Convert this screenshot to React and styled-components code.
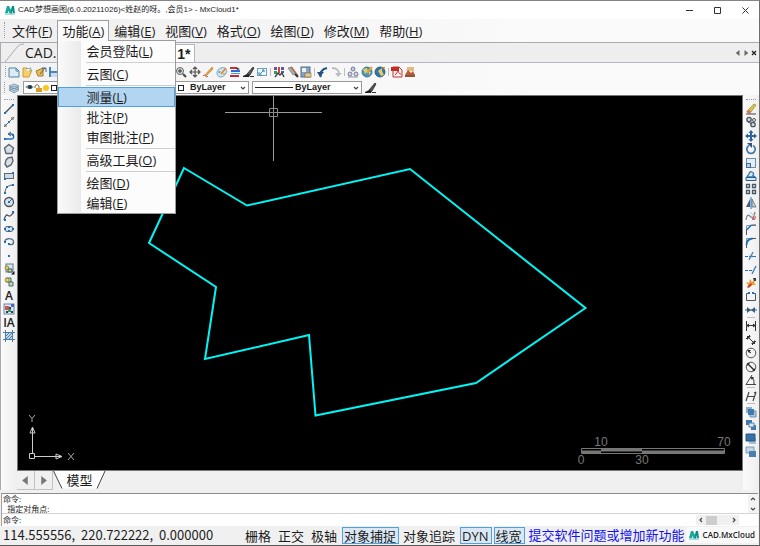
import React from "react";
import styled, { createGlobalStyle, css } from "styled-components";

const UI = '"Open Sans", "Noto Sans CJK SC", sans-serif';

const GlobalStyle = createGlobalStyle`
  * { box-sizing: border-box; }
  body { margin: 0; font-family: ${UI}; font-size: 13px; line-height: 16px; color: #1c1c1c; }
  button, input, select { font: inherit; color: inherit; margin: 0; padding: 0; border: 0; background: none; border-radius: 0; }
  svg { display: block; flex: none; }
`;

const Window = styled.div`
  display: flex;
  flex-direction: column;
  height: 100vh;
  overflow: hidden;
  border-top: 1px solid #858585;
  border-right: 1px solid #6f6f6f;
  border-bottom: 1px solid #555;
  background: #f0f0f0;
`;

/* ---------- title bar ---------- */
const TitleBar = styled.header`
  display: flex;
  align-items: center;
  height: 18px;
  flex: none;
  padding: 0 7px 0 5px;
  gap: 3px;
  background: #fff;
`;
const Title = styled.h1`
  flex: 1;
  margin: 0;
  font-family: "Liberation Sans", "Noto Sans CJK SC", sans-serif;
  font-size: 8px;
  line-height: 12px;
  font-weight: 400;
  white-space: nowrap;
`;
const Caption = styled.div`
  display: flex;
  gap: 14px;
`;
const CaptionButton = styled.button`
  display: grid;
  place-items: center;
  width: 14px;
  height: 16px;
`;

/* ---------- menu bar ---------- */
const MenuBar = styled.nav`
  display: flex;
  align-items: stretch;
  height: 23px;
  flex: none;
  padding: 1px 0 2px 4px;
  background: linear-gradient(90deg, #efefef, #fafafa 70%);
`;
const Grip = styled.span`
  flex: none;
  align-self: center;
  ${(p) =>
    p.$across
      ? css`width: 10px; margin-bottom: 3px; border-top: 1px dotted #999;`
      : css`height: ${p.$tall ? 16 : 11}px; border-left: 1px dotted #999;`}
`;
const MenuList = styled.ul`
  display: flex;
  margin: 0 0 0 2px;
  padding: 0;
  list-style: none;
`;
const MenuItem = styled.li`
  position: relative;
`;
const MenuButton = styled.button`
  height: 20px;
  padding: 0 4px;
  white-space: nowrap;
  border: 1px solid transparent;
  border-bottom: 0;
  ${(p) =>
    p.$open &&
    css`
      border-color: #a0a0a0;
      background: #fbfbfb;
    `}
`;
const Dropdown = styled.div`
  position: absolute;
  z-index: 5;
  top: 20px;
  left: 0;
  width: 119px;
  border: 1px solid #9c9c9c;
  background: linear-gradient(90deg, #fafafa, #eaeaea 23px, #fcfcfc 23px);
  &::before {
    content: "";
    position: absolute;
    top: -1px;
    left: 0;
    width: 50px;
    height: 1px;
    background: #fbfbfb;
  }
`;
const DropdownItem = styled.button`
  display: flex;
  align-items: center;
  width: 100%;
  height: 20px;
  padding-left: 27px;
  white-space: nowrap;
  border: 1px solid ${(p) => (p.$active ? "#4fa0e0" : "transparent")};
  background: ${(p) => (p.$active ? "#b2d5f1" : "transparent")};
`;
const Divider = styled.hr`
  height: 1px;
  margin: 1px 0 1px 28px;
  border: 0;
  background: #cfcfcf;
`;

/* ---------- document tabs ---------- */
const DocTabs = styled.div`
  display: flex;
  align-items: stretch;
  height: 21px;
  flex: none;
  border-top: 1px solid #a9abb3;
  border-bottom: 1px solid #b4b6c0;
  border-left: 1px solid #a9abb3;
  background: #eee;
`;
const DocTab = styled.button`
  display: flex;
  align-items: center;
  font-size: 14px;
  white-space: nowrap;
  ${(p) =>
    p.$current
      ? css`
          width: 137px;
          justify-content: flex-end;
          padding-right: 3px;
          margin-top: 1px;
          font-family: "Liberation Sans", sans-serif;
          font-weight: 700;
          background: #fff;
          border: 1px solid #b4b6c0;
          border-bottom: 0;
        `
      : css`padding-right: 1px;`}
`;
const DocTabControls = styled.div`
  display: flex;
  align-items: center;
  margin-left: auto;
  padding-right: 1px;
`;
const TinyButton = styled.button`
  display: grid;
  place-items: center;
  width: ${(p) => p.$w || 8}px;
  height: ${(p) => p.$h || 10}px;
`;

/* ---------- toolbars ---------- */
const Toolbars = styled.div`
  flex: none;
  border-left: 1px solid #a9abb3;
  background: linear-gradient(90deg, #f2f2f2, #fafafa 70%);
`;
const ToolRow = styled.div`
  display: flex;
  align-items: center;
  height: ${(p) => p.$h}px;
  padding-left: ${(p) => 6 - p.$gap}px;
  gap: ${(p) => p.$gap}px;
`;
const ToolGroup = styled.div`
  display: flex;
  flex: none;
  flex-direction: ${(p) => (p.$vertical ? "column" : "row")};
  justify-content: space-between;
  ${(p) => (p.$vertical ? "height" : "width")}: ${(p) => p.$size}px;
  margin-left: ${(p) => p.$indent || 0}px;
`;
const ToolButton = styled.button`
  display: grid;
  place-items: center;
  width: 12px;
  height: 12px;
`;
const Separator = styled.span`
  flex: none;
  background: #bdbdbd;
  ${(p) => (p.$across ? css`width: 8px; height: 1px; margin: 1px 0 2px;` : css`width: 1px; height: 8px;`)}
`;
const Combo = styled.label`
  position: relative;
  display: flex;
  align-items: center;
  flex: none;
  width: ${(p) => p.$w}px;
  height: 13px;
  margin-left: ${(p) => p.$indent || 0}px;
  border: 1px solid #9a9a9a;
  background: #fff;
  & > svg { position: absolute; left: ${(p) => p.$art || 3}px; pointer-events: none; }
  & > svg:last-child { left: auto; right: 2px; }
`;
const Select = styled.select`
  appearance: none;
  width: 100%;
  height: 11px;
  padding-left: ${(p) => p.$pad}px;
  font-family: "Liberation Sans", sans-serif;
  font-size: 9px;
  line-height: 11px;
  font-weight: 700;
`;

/* ---------- workspace ---------- */
const Workspace = styled.main`
  display: flex;
  flex: 1;
  min-height: 0;
`;
const SideBar = styled.aside`
  display: flex;
  flex-direction: column;
  align-items: center;
  flex: none;
  width: 16px;
  padding-top: 4px;
  background: linear-gradient(90deg, #fafafa, #efefef);
  ${(p) => p.$left && css`width: 17px; border-left: 1px solid #a9abb3;`}
`;
const Center = styled.div`
  display: flex;
  flex-direction: column;
  flex: 1;
  min-width: 0;
`;
const Canvas = styled.section`
  position: relative;
  flex: 1;
  overflow: hidden;
  border: 1px solid #777;
  background: #000;
`;
const Overlay = styled.svg`
  position: absolute;
  ${(p) => p.$at}
`;
const SheetTabs = styled.div`
  display: flex;
  height: 19px;
  flex: none;
  background: #f0f0f0;
`;
const SheetArrow = styled.button`
  display: grid;
  place-items: center;
  width: 18px;
  border: 1px solid #c2c2c2;
  border-top: 0;
  border-left: 0;
`;
const SheetTab = styled.button`
  position: relative;
  width: 53px;
  height: 18px;
  & > svg { position: absolute; top: 0; left: 0; }
  & > span { position: relative; }
`;

/* ---------- command line ---------- */
const CommandPane = styled.section`
  display: flex;
  flex: none;
  flex-direction: column;
  margin: 3px 1px 0 1px;
  border-top: 1px solid #8c8c8c;
  border-left: 1px solid #a0a0a0;
  background: #fff;
  font-size: 8px;
  line-height: 10px;
`;
const History = styled.div`
  display: flex;
  justify-content: space-between;
  height: 20px;
  border-bottom: 1px solid #d4d4d4;
`;
const Log = styled.div`
  padding-left: 1px;
  white-space: pre;
`;
const ScrollColumn = styled.div`
  display: flex;
  flex-direction: column;
  justify-content: space-between;
  background: #f3f3f3;
`;
const Prompt = styled.div`
  display: flex;
  align-items: center;
  height: 12px;
  padding: 0 19px 0 1px;
  & > input { flex: 1; min-width: 0; height: 10px; outline: 0; }
`;
const ScrollRow = styled.div`
  display: flex;
  align-items: center;
  width: 43px;
  height: 10px;
  background: #f0f0f0;
  & > button:last-child { margin-left: auto; }
`;
const Thumb = styled.span`
  width: 11px;
  height: 9px;
  background: #cdcdcd;
`;

/* ---------- status bar ---------- */
const StatusBar = styled.footer`
  display: flex;
  align-items: center;
  height: 19px;
  flex: none;
  padding: 0 1px 1px 3px;
  background: #f0f0f0;
  white-space: nowrap;
`;
const Coordinates = styled.output`
  flex: none;
  width: 240px;
  font-family: "Noto Sans CJK SC", sans-serif;
  white-space: pre;
`;
const Modes = styled.div`
  display: flex;
  gap: 2px;
`;
const Mode = styled.button`
  height: 17px;
  padding: 0 2px 0 1px;
  border: 1px solid ${(p) => (p.$on ? "#4fa0e0" : "transparent")};
  background: ${(p) => (p.$on ? "#dbe8f4" : "transparent")};
`;
const Feedback = styled.a`
  margin-left: 4px;
  color: #1212f0;
  text-decoration: none;
`;
const Brand = styled.div`
  display: flex;
  align-items: center;
  gap: 4px;
  height: 16px;
  margin-left: auto;
  padding: 0 3px;
  background: #f9f9f9;
  font-size: 8px;
  font-weight: 600;
  color: #222;
`;

/* ---------- icons ---------- */
const B = "#1d6fc0";
const K = "#4a5560";
const dot = (x, y, r = 1) => <rect x={x - r} y={y - r} width={2 * r} height={2 * r} fill={B} />;

const ICONS = {
  newFile: <><path d="M1 2h7l3 3v6H1z" fill="#dcecf7" stroke="#5583a6" /><path d="M8 2v3h3" fill="none" stroke="#5583a6" /></>,
  open: <><path d="M2 2h4l1 2h4L8 11H2z" fill="#f5cf6c" stroke="#d19b2b" /><path d="M5 3l5-1-2 4" fill="#fff" stroke="#8aa" /></>,
  openWeb: <><path d="M1 5l7-3v8H3z" fill="#eebe4d" stroke="#a07a28" /><path d="M5 8l5-6M7 2h4v4" fill="none" stroke="#46617a" /></>,
  save: <><rect x="1" y="1" width="10" height="10" fill="#4c83b8" /><rect x="3" y="1" width="6" height="4" fill="#e8f1f8" /><rect x="3" y="7" width="6" height="4" fill="#c9dced" /></>,
  zoom: <><circle cx="5" cy="5" r="3.5" fill="#cfd8df" stroke="#666" /><path d="M8 8l3 3" stroke="#444" strokeWidth="2" /><path d="M3 5h4M5 3v4" stroke="#333" /></>,
  pan: <path d="M6 1v10M1 6h10M4 3l2-2 2 2M4 9l2 2 2-2M3 4L1 6l2 2M9 4l2 2-2 2" fill="none" stroke="#555" strokeWidth="1.2" />,
  pencil: <><path d="M3 9l7-8 1 2-7 7z" fill="#f0a33a" stroke="#b87424" strokeWidth=".6" /><path d="M1 10c2-3 3 3 5 0" fill="none" stroke="#b5403a" /></>,
  palette: <><path d="M1 7c0-5 7-7 9-4s-1 8-6 8c-2 0-3-2-3-4z" fill="#d5e4ea" stroke="#75aac8" /><path d="M5 8l5-6" stroke="#db8a31" strokeWidth="1.5" /><circle cx="3.5" cy="6" r="1" fill="#36a0d5" /><circle cx="8" cy="8" r="1" fill="#e5a438" /></>,
  layersColor: <><path d="M1 1h7v2H1z" fill="#d32f2f" /><path d="M2 4h9v2H2z" fill="#3468d4" /><path d="M2 7h9v1H2z" fill="#37a6d2" /><path d="M1 9h9v2H1z" fill="#c22644" /><path d="M7 1l4 2-3 1z" fill="#333" /></>,
  brush: <><path d="M4 8l6-7 1 1-4 7z" fill="#555" stroke="#222" strokeWidth=".7" /><path d="M0 10l4-2 3 1-1 2H0z" fill="#222" /><path d="M7 10.500h4" stroke="#333" /></>,
  resize: <><rect x="1.500" y="2.500" width="9" height="7" fill="#eef7fb" stroke="#6ba2bd" /><path d="M4 8l4-4M6 4h2v2M3 6v3h3" fill="none" stroke="#4283a7" /></>,
  find: <><path d="M1 1h3v3H1zM8 1h3v3H8z" fill="#74528e" /><path d="M1 5h3v3H1z" fill="#339a5b" /><path d="M5 1h2v6H5z" fill="#c6484b" /><path d="M8 5h3v2H8z" fill="#38689c" /><path d="M2 11l3-4 2 2 2-2 2 4" fill="none" stroke="#444" strokeWidth="1.4" /></>,
  tools: <><path d="M1 2l4-1 4 6-3 2z" fill="#a8adb3" stroke="#777" strokeWidth=".7" /><path d="M4 1l7 9" stroke="#bd6b57" strokeWidth="1.5" /><path d="M8 8l3 3" stroke="#333" strokeWidth="2" /></>,
  panel: <><rect x="1" y="1" width="9" height="10" fill="#86a4c0" stroke="#526c85" /><rect x="2" y="2" width="4" height="4" fill="#e9f0f5" /><rect x="5" y="7" width="6" height="4" fill="#e9c987" stroke="#7b613b" strokeWidth=".6" /></>,
  undo: <><path d="M4 11C2 7 5 3 10 2" fill="none" stroke="#234f83" strokeWidth="2" /><path d="M0 6h7l-4 5z" fill="#234f83" /></>,
  redo: <><path d="M2 2c5 0 7 3 7 6" fill="none" stroke="#b7bcc1" strokeWidth="2" /><path d="M5 7h7l-4 4z" fill="#b7bcc1" /></>,
  stamp: <><circle cx="6" cy="3" r="2" fill="#c6ccda" stroke="#717a9a" /><circle cx="3" cy="8" r="2" fill="#d5d9e4" stroke="#717a9a" /><circle cx="9" cy="8" r="2" fill="#d5d9e4" stroke="#717a9a" /><path d="M1 11h10" stroke="#8a91aa" /></>,
  globe: <><circle cx="6" cy="6" r="5" fill="#4596c7" stroke="#3c657a" strokeWidth=".8" /><path d="M2 3l4-1 1 3-3 3zM8 6l2 0-2 4z" fill="#d7cf6d" /><path d="M6 7l5-6" stroke="#e5a33a" strokeWidth="2" /></>,
  globeBack: <><circle cx="6" cy="6" r="5" fill="#2e77ab" stroke="#245272" strokeWidth=".8" /><path d="M4 5l4-3v3l2 4-3 1z" fill="#edc667" /><path d="M8 1l3 0-1 3z" fill="#d57d2e" /></>,
  pdf: <><path d="M2 1h6l3 3v7H2z" fill="#f9f0ef" stroke="#b53b34" /><rect x="0" y="1" width="8" height="4" fill="#ca2c25" /><path d="M4 9c2-1 2-4 3-4s0 3 3 3" fill="none" stroke="#ca2c25" /></>,
  image: <><path d="M3 1h7v4H3z" fill="#e9b87c" /><path d="M1 9l3-5 3 3 2-2 2 4v2H1z" fill="#b85b36" /><path d="M1 10h10" stroke="#6a4a3c" /></>,
  layers: <path d="M1 8l5 3 5-3-5-2zM1 6l5 3 5-3-5-2zM1 4l5 3 5-3-5-2z" fill="#cbdde9" stroke="#6c8ba1" strokeWidth=".8" />,

  line: <><path d="M2 10l8-8" stroke={K} strokeWidth="1.4" />{dot(2, 10)}{dot(10, 2)}</>,
  xline: <><path d="M1 11L11 1M2 8v2h2M8 2h2v2" stroke="#666" fill="none" />{dot(6, 6)}</>,
  polyline: <><path d="M2 9h6c4 0 3-5 0-5H6" fill="none" stroke={B} strokeWidth="1.4" /><path d="M8 2L5 4l3 2" fill="none" stroke={K} />{dot(2, 9)}{dot(10, 5)}</>,
  polygon: <path d="M6 1.500l4.500 3.500L9 10.500H3L1.500 5z" fill="#d8e0e6" stroke="#5c6872" strokeWidth="1.400" />,
  blob: <path d="M5 2l4-1 1 4-2 4-4 2-2-3 1-4z" fill="#d8e0e6" stroke="#5c6872" strokeWidth="1.400" />,
  rectangle: <><rect x="1.500" y="3.500" width="9" height="5" fill="#cfdbe5" stroke="#5c6872" />{dot(2, 9)}{dot(10, 3)}</>,
  arc: <><path d="M2 10c0-5 3-8 8-8" fill="none" stroke={K} />{dot(2, 10)}{dot(4, 4)}{dot(10, 2)}</>,
  circle: <><circle cx="6" cy="6" r="4.500" fill="#dce4ea" stroke={K} strokeWidth="1.300" /><path d="M6 6l3-3" stroke={B} />{dot(6, 6)}</>,
  spline: <><path d="M1 10c2-7 3-5 5-4s3-2 5-4" fill="none" stroke={K} strokeWidth="1.300" />{dot(2, 10)}{dot(10, 2)}</>,
  ellipse: <><ellipse cx="6" cy="6" rx="4.500" ry="2.500" fill="#dfe6ec" stroke={K} />{dot(2, 6)}{dot(6, 4)}{dot(10, 6)}{dot(6, 8)}</>,
  ellipseArc: <><path d="M2 7C0 2 10 1 10.500 5.500 11 9 7 9 6 8" fill="none" stroke="#5d7282" strokeWidth="1.400" />{dot(6, 8)}{dot(2, 6)}</>,
  point: dot(6, 6),
  insert: <><rect x="3" y="1" width="7" height="8" fill="#dce8f3" stroke="#5c7890" /><circle cx="4" cy="5" r="2" fill="#e5d154" stroke="#786f2c" strokeWidth=".7" /><path d="M5 6h4v3H5z" fill="#e5d154" stroke="#345e86" /><path d="M11.500 8v3.500H8z" fill="#111" /></>,
  block: <><path d="M3 2h5v4H3z" fill="#d8dc72" stroke="#41679a" /><circle cx="4" cy="4" r="2" fill="#e5d154" stroke="#78722c" strokeWidth=".6" /><path d="M6 6h4v4H6z" fill="#d8dc72" stroke="#41679a" /></>,
  table: <><rect x="1" y="1" width="10" height="10" fill="#dfe7f0" stroke="#6b86a0" /><path d="M2 3h4v4H2z" fill="#d15353" /><path d="M6 4h2v2H6zM3 8h2v2H3zM8 8h2v2H8z" fill="#293d65" /><path d="M5 6h3v3H5z" fill="#39a152" /><path d="M8 1h3v3H8z" fill="#426cc4" /></>,
  hatch: <><rect x="2.500" y="2.500" width="7" height="7" fill="#c4d8e8" /><path d="M2.500 0v12M9.500 0v12M0 2.500h12M0 9.500h12M3 6l3-3M3 9l6-6M6 9l3-3" stroke="#4b7ea6" /></>,

  erase: <><path d="M3 7l6-6 2 1-5 7z" fill="#d9c53a" stroke="#817a44" strokeWidth=".6" /><path d="M1 9l2-2 3 2-1 2z" fill="#d76c60" /><path d="M1 11h10" stroke="#444" /></>,
  copy: <><circle cx="4" cy="3.500" r="2.200" fill="#d0dbe4" stroke={K} strokeWidth="1.300" /><circle cx="8" cy="8.500" r="2.200" fill="#d0dbe4" stroke={K} strokeWidth="1.300" /><circle cx="9" cy="4" r="1.500" fill="none" stroke={K} /><path d="M3 6l4 2" stroke={K} /></>,
  move: <><path d="M6 2v8M2 6h8" stroke="#2f659c" strokeWidth="2" /><path d="M6 0l2.500 3h-5zM6 12l2.500-3h-5zM0 6l3-2.500v5zM12 6L9 3.500v5z" fill="#2f659c" /></>,
  rotate: <><path d="M4 2.500a4.200 4.200 0 1 0 4 0" fill="none" stroke="#477bab" strokeWidth="1.800" /><path d="M2 0h5v5z" fill="#2d567f" /></>,
  scale: <><rect x="1.500" y="1.500" width="9" height="9" fill="#e3edf4" stroke="#6d8ea8" /><rect x="1.500" y="6.500" width="4" height="4" fill="#b7cede" stroke="#3e6d94" /></>,
  offset: <><path d="M2 7c0-2 2-2 2-3s1-3 3-2 2 2 1 3 2 1 2 2z" fill="#d8e6f0" stroke="#2f76b5" strokeWidth="1.300" /><path d="M1 7.500h10v3H1z" fill="#dce8f1" stroke="#2c5e8b" /></>,
  array: <path d="M1.500 1.500h3v3h-3zM7.500 1.500h3v3h-3zM1.500 7.500h3v3h-3zM7.500 7.500h3v3h-3z" fill="#e7edf1" stroke="#485967" strokeWidth="1.300" />,
  mirror: <><path d="M5 2v8H1z" fill="#4a5b69" /><path d="M7 2v8h4z" fill="#c4d0d8" stroke="#4a5b69" strokeWidth=".7" /><path d="M6 0v12" stroke={B} /></>,
  splineEdit: <><path d="M1 10C2 3 4 5 6 7s3-1 4-5" fill="none" stroke="#7a8790" strokeWidth="1.300" /><path d="M5 2l5 5" stroke="#b4c2cb" /><rect x="7" y="7" width="3" height="3" fill="#c65cc2" /><path d="M9 6h2v3H9z" fill="#e5a73c" /></>,
  chamfer: <><path d="M1.500 11V1.500H11" fill="none" stroke="#8c969e" /><path d="M1.500 11V6l5-5H11" fill="none" stroke={K} /><path d="M1.500 6l5-5" stroke={B} strokeWidth="1.400" /></>,
  fillet: <><path d="M1.500 11V1.500H11" fill="none" stroke="#8c969e" /><path d="M1.500 11V8" stroke={K} /><path d="M1.500 8c0-4 2-6 6-6.500" fill="none" stroke={B} strokeWidth="1.800" /><path d="M7 1.500h4" stroke={K} /></>,
  trim: <><path d="M0 6.500h4M8 6.500h4" stroke={B} strokeDasharray="3 1" /><path d="M4 10l4-8M4 6.500h4" stroke="#4d84b3" strokeWidth="1.300" /></>,
  extend: <><path d="M0 6.500h7" stroke={B} strokeDasharray="3 1" /><path d="M7 10l4-8" stroke="#3a81b9" strokeWidth="1.400" /></>,
  explode: <><path d="M1 5l3 1 1-4 2 3 4-4-2 5 2 2-4 0-3 3-1-3z" fill="#ec9a32" /><path d="M2 10l4-4 1 2-4 3z" fill="#c43830" /><path d="M8 1h3v3H9z" fill="#38383d" /></>,
  breakAt: <><path d="M4 3.500H1.500v7h9v-7H8" fill="none" stroke={K} />{dot(4, 3)}{dot(8, 3)}</>,
  join: <><path d="M0 6h12" stroke={K} /><path d="M2 3l4 3-4 3zM10 3L6 6l4 3z" fill="#315f8b" /></>,

  dimLinear: <><path d="M1.500 1v10M10.500 1v10M1 5.500h10" stroke="#333" fill="none" /><path d="M1 5.500l3-2v4zM11 5.500l-3-2v4z" fill="#333" /></>,
  dimAligned: <><path d="M3 3l6 6M1 5l4-4M7 11l4-4" stroke="#333" /><path d="M2 2h4L2 6zM10 10H6l4-4z" fill="#333" /></>,
  dimRadius: <><circle cx="6" cy="6" r="4.800" fill="none" stroke="#555" /><path d="M6 6L3 4" stroke="#333" /><path d="M2 3h4L4 6z" fill="#333" /></>,
  dimDiameter: <><circle cx="6" cy="6" r="4.800" fill="none" stroke="#555" /><path d="M3 3l6 6" stroke="#333" strokeWidth="1.400" /><path d="M2 2h3L2 5zM10 10H7l3-3z" fill="#333" /></>,
  dimAngle: <><path d="M11 10.500H1L7 1" fill="none" stroke="#444" /><path d="M6 3c3 1 3 4 3 7" fill="none" stroke="#333" /><path d="M5 3l4 0-2 3z" fill="#333" /></>,
  dimEdit: <path d="M1 11L4 2M8 11l3-9M3 6.500h6M9 3l2-1" fill="none" stroke="#444" strokeWidth="1.200" />,
  order1: <><path d="M1 1h6v6H1z" fill="#8caecb" /><path d="M5 5h6v6H5z" fill="#b3c7d8" stroke="#6f90ab" /><path d="M3 3h6v6H3z" fill="#3e7bb0" /></>,
  order2: <><path d="M1 1h6v5H1z" fill="#3f78aa" /><path d="M6 6h5v5H6z" fill="#3f78aa" /><path d="M4 4h5v4H4z" fill="#dbe8f2" stroke="#5783a7" /></>,
  order3: <><path d="M4 5h7v6H4z" fill="#a8bfd2" /><path d="M1 1h9v7H1z" fill="#3671a7" stroke="#295982" /></>,
  order4: <><path d="M1 1h8v6H1z" fill="#c3d5e3" stroke="#7a9bb5" /><path d="M4 5h7v6H4z" fill="#4b80ae" /></>,
};

const TextGlyph = styled.span`
  font-size: 12px;
  line-height: 12px;
  font-weight: 600;
  color: #222;
`;

function Icon({ name }) {
  return (
    <svg width="12" height="12" viewBox="0 0 12 12" aria-hidden="true">
      {ICONS[name]}
    </svg>
  );
}

function Tools({ names, size, vertical, indent }) {
  return (
    <ToolGroup $size={size} $vertical={vertical} $indent={indent}>
      {names.map((n) => (
        <ToolButton key={n} aria-label={n}>
          {n === "A" || n === "IA" ? <TextGlyph>{n}</TextGlyph> : <Icon name={n} />}
        </ToolButton>
      ))}
    </ToolGroup>
  );
}

function Logo({ size }) {
  return (
    <svg width={size} height={size} viewBox="0 0 10 10" aria-hidden="true">
      <path d="M0 8L2 1h2L3 8zM4 1l2 4-1 4-2-4z" fill="#19a79a" />
      <path d="M5 8l2-7h2l1 7H8L7.500 5 7 9z" fill="#0a8d88" />
      <path d="M0 9h10" stroke="#4cc6b7" />
    </svg>
  );
}

function Chevron({ dir = "down", size = 6 }) {
  const turn = { down: 0, left: 90, up: 180, right: 270 }[dir];
  return (
    <svg width={size} height={size} viewBox="0 0 6 6" aria-hidden="true">
      <path d="M1 2l2 2 2-2" fill="none" stroke="#444" strokeWidth="1.200" transform={`rotate(${turn} 3 3)`} />
    </svg>
  );
}

function Triangle({ dir, size, color = "#666" }) {
  return (
    <svg width={size} height={size} viewBox="0 0 8 8" aria-hidden="true">
      <path d={dir === "left" ? "M6 0v8L1 4z" : "M2 0v8l5-4z"} fill={color} />
    </svg>
  );
}

/* ---------- data ---------- */
const MENUS = [
  ["文件", "F"], ["功能", "A"], ["编辑", "E"], ["视图", "V"],
  ["格式", "O"], ["绘图", "D"], ["修改", "M"], ["帮助", "H"],
];
const FUNCTION_MENU = [
  ["会员登陆", "L"], null, ["云图", "C"], null, ["测量", "L"], ["批注", "P"],
  ["审图批注", "P"], null, ["高级工具", "O"], null, ["绘图", "D"], ["编辑", "E"],
];
const DRAW_TOOLS = [
  "line", "xline", "polyline", "polygon", "blob", "rectangle", "arc", "circle", "spline",
  "ellipse", "ellipseArc", "point", "insert", "block", "A", "table", "IA", "hatch",
];
const MODIFY_TOOLS = [
  "erase", "copy", "move", "rotate", "scale", "offset", "array", "mirror", "splineEdit",
  "chamfer", "fillet", "trim", "extend", "explode", "breakAt", "join",
];
const MODES = [
  ["栅格", false], ["正交", false], ["极轴", false], ["对象捕捉", true],
  ["对象追踪", false], ["DYN", true], ["线宽", true],
];

const Label = ({ item: [text, key] }) => (
  <span>{text}(<u>{key}</u>)</span>
);

export default function App() {
  return (
    <Window>
      <GlobalStyle />
      <TitleBar>
        <Logo size={10} />
        <Title>CAD梦想画图(6.0.20211026)&lt;姓赵的呀。,会员1&gt; - MxCloud1*</Title>
        <Caption>
          <CaptionButton aria-label="最小化">
            <svg width="7" height="7"><path d="M0 3.500h7" stroke="#333" /></svg>
          </CaptionButton>
          <CaptionButton aria-label="最大化">
            <svg width="7" height="7"><path d="M.5 .5h6v6h-6z" fill="none" stroke="#333" /></svg>
          </CaptionButton>
          <CaptionButton aria-label="关闭">
            <svg width="7" height="7"><path d="M.5 .5l6 6M6.500 .5l-6 6" stroke="#333" /></svg>
          </CaptionButton>
        </Caption>
      </TitleBar>

      <MenuBar>
        <Grip $tall />
        <MenuList>
          {MENUS.map((m) => (
            <MenuItem key={m[1]}>
              <MenuButton $open={m[1] === "A"}><Label item={m} /></MenuButton>
              {m[1] === "A" && (
                <Dropdown>
                  {FUNCTION_MENU.map((f, i) =>
                    f ? (
                      <DropdownItem key={i} $active={f[0] === "测量"}><Label item={f} /></DropdownItem>
                    ) : (
                      <Divider key={i} />
                    )
                  )}
                </Dropdown>
              )}
            </MenuItem>
          ))}
        </MenuList>
      </MenuBar>

      <DocTabs>
        <DocTab>
          <svg width="24" height="19"><path d="M4 19L17 3q2-2 6-2" fill="none" stroke="#a9abb3" /></svg>
          CAD.
        </DocTab>
        <DocTab $current>1*</DocTab>
        <DocTabControls>
          <TinyButton aria-label="上一个"><Triangle dir="left" size={6} /></TinyButton>
          <TinyButton aria-label="下一个"><Triangle dir="right" size={6} /></TinyButton>
          <TinyButton aria-label="关闭标签">
            <svg width="6" height="6"><path d="M1 1l4 4M5 1L1 5" stroke="#222" strokeWidth="1.300" /></svg>
          </TinyButton>
        </DocTabControls>
      </DocTabs>

      <Toolbars>
        <ToolRow $h={17} $gap={2}>
          <Grip />
          <Tools names={["newFile", "open", "openWeb", "save"]} size={52} />
          <Tools names={["zoom", "pan", "pencil", "palette", "layersColor", "brush", "resize"]} size={93} indent={113} />
          <Separator />
          <Tools names={["find", "tools", "panel"]} size={39} />
          <Separator />
          <Tools names={["undo", "redo"]} size={25} />
          <Separator />
          <Tools names={["stamp", "globe", "globeBack"]} size={39} />
          <Separator />
          <Tools names={["pdf", "image"]} size={25} />
        </ToolRow>
        <ToolRow $h={15} $gap={3}>
          <Grip />
          <Icon name="layers" />
          <Combo $w={100} $art={1}>
            <Select $pad={40} aria-label="图层"><option>0</option></Select>
            <svg width="36" height="10">
              <path d="M0 4q4-4 9 0q-4 4-9 0z" fill="#7c97a8" /><circle cx="5" cy="4" r="2" fill="#223748" />
              <path d="M10 5V3q2-3 4 0v2" fill="none" stroke="#8a6a24" /><rect x="11" y="5" width="6" height="4" fill="#d99b2b" />
              <circle cx="21" cy="5" r="3" fill="#ffc31c" /><rect x="26.500" y="2.500" width="5" height="5" fill="none" stroke="#222" />
            </svg>
            <Chevron />
          </Combo>
          <Combo $w={105} $indent={18} $art={32}>
            <Select $pad={45} aria-label="颜色"><option>ByLayer</option></Select>
            <svg width="8" height="8"><rect x="1.500" y="1.500" width="5" height="5" fill="none" stroke="#222" /></svg>
            <Chevron />
          </Combo>
          <Combo $w={110} $art={2}>
            <Select $pad={42} aria-label="线型"><option>ByLayer</option></Select>
            <svg width="38" height="3"><path d="M0 1.500h38" stroke="#222" /></svg>
            <Chevron />
          </Combo>
          <Icon name="brush" />
        </ToolRow>
      </Toolbars>

      <Workspace>
        <SideBar $left>
          <Grip $across />
          <Tools vertical names={DRAW_TOOLS} size={239} />
        </SideBar>
        <Center>
          <Canvas>
            <Overlay $at="top: 0; left: 0;" width="600" height="340" viewBox="18 96 600 340">
              <path
                d="M184 168L247 205.500L410 169L585.500 308L476 383L315.500 415.500L309 335L205 359L216 287L149 243Z"
                fill="none" stroke="#00f5f5" strokeWidth="2"
              />
              <path d="M225 112.500h44M278 112.500h44M273.500 96v12M273.500 117v44" stroke="#9a9a9a" />
              <path d="M269.500 108.500h8v8h-8zM269 112.500h9M273.500 108v9" fill="none" stroke="#8a8a8a" />
            </Overlay>
            <Overlay $at="left: 8px; bottom: 6px;" width="52" height="52" viewBox="26 412 52 52">
              <path d="M29.500 453.500h5v5h-5zM32.500 453v-26M35 456.500h27" fill="none" stroke="#ccc" />
              <path d="M32.500 427l-2.500 6h5zM62 456.500l-6-2.500v5z" fill="none" stroke="#ccc" />
              <path d="M29 415l3 3.500 3-3.500M32 418.500v3.500M68 453l6 7M74 453l-6 7" fill="none" stroke="#aaa" />
            </Overlay>
            <Overlay
              $at="right: 10px; bottom: 3px;" width="156" height="32" viewBox="576 435 156 32"
              fill="#777" fontFamily="Liberation Sans, sans-serif" fontSize="12" textAnchor="middle"
            >
              <path d="M581.500 448.500h143v5h-143zM581 451h143" fill="none" stroke="#777" />
              <path d="M581 451h20v2h-20zM601 449h41v2h-41zM642 451h82v2h-82z" />
              <text x="601" y="446">10</text>
              <text x="724" y="446">70</text>
              <text x="581" y="464">0</text>
              <text x="642" y="464">30</text>
            </Overlay>
          </Canvas>
          <SheetTabs>
            <SheetArrow aria-label="上一布局"><Triangle dir="left" size={9} color="#777" /></SheetArrow>
            <SheetArrow aria-label="下一布局"><Triangle dir="right" size={9} color="#777" /></SheetArrow>
            <SheetTab>
              <svg width="53" height="18"><path d="M.5 0L9 17.500h35L52 0" fill="#fff" /><path d="M.5 0L9 17.500M44 17.500L52 0" stroke="#444" /></svg>
              <span>模型</span>
            </SheetTab>
          </SheetTabs>
        </Center>
        <SideBar>
          <Grip $across />
          <Tools vertical names={MODIFY_TOOLS} size={213} />
          <Separator $across />
          <Tools vertical names={["dimLinear", "dimAligned", "dimRadius", "dimDiameter", "dimAngle"]} size={66} />
          <Separator $across />
          <Tools vertical names={["dimEdit"]} size={12} />
          <Separator $across />
          <Tools vertical names={["order1", "order2", "order3", "order4"]} size={52} />
        </SideBar>
      </Workspace>

      <CommandPane>
        <History>
          <Log>{"命令:\n  指定对角点:"}</Log>
          <ScrollColumn>
            <TinyButton $w={10} $h={9} aria-label="向上"><Chevron dir="up" /></TinyButton>
            <TinyButton $w={10} $h={9} aria-label="向下"><Chevron /></TinyButton>
          </ScrollColumn>
        </History>
        <Prompt>
          <label htmlFor="command">命令:</label>
          <input id="command" type="text" />
          <ScrollRow>
            <TinyButton $w={10} aria-label="向左"><Chevron dir="left" /></TinyButton>
            <Thumb />
            <TinyButton $w={10} aria-label="向右"><Chevron dir="right" /></TinyButton>
          </ScrollRow>
        </Prompt>
      </CommandPane>

      <StatusBar>
        <Coordinates>114.555556,  220.722222,  0.000000</Coordinates>
        <Modes>
          {MODES.map(([text, on]) => (
            <Mode key={text} $on={on} aria-pressed={on}>{text}</Mode>
          ))}
        </Modes>
        <Feedback href="#feedback">提交软件问题或增加新功能</Feedback>
        <Brand><Logo size={10} />CAD.MxCloud</Brand>
      </StatusBar>
    </Window>
  );
}
